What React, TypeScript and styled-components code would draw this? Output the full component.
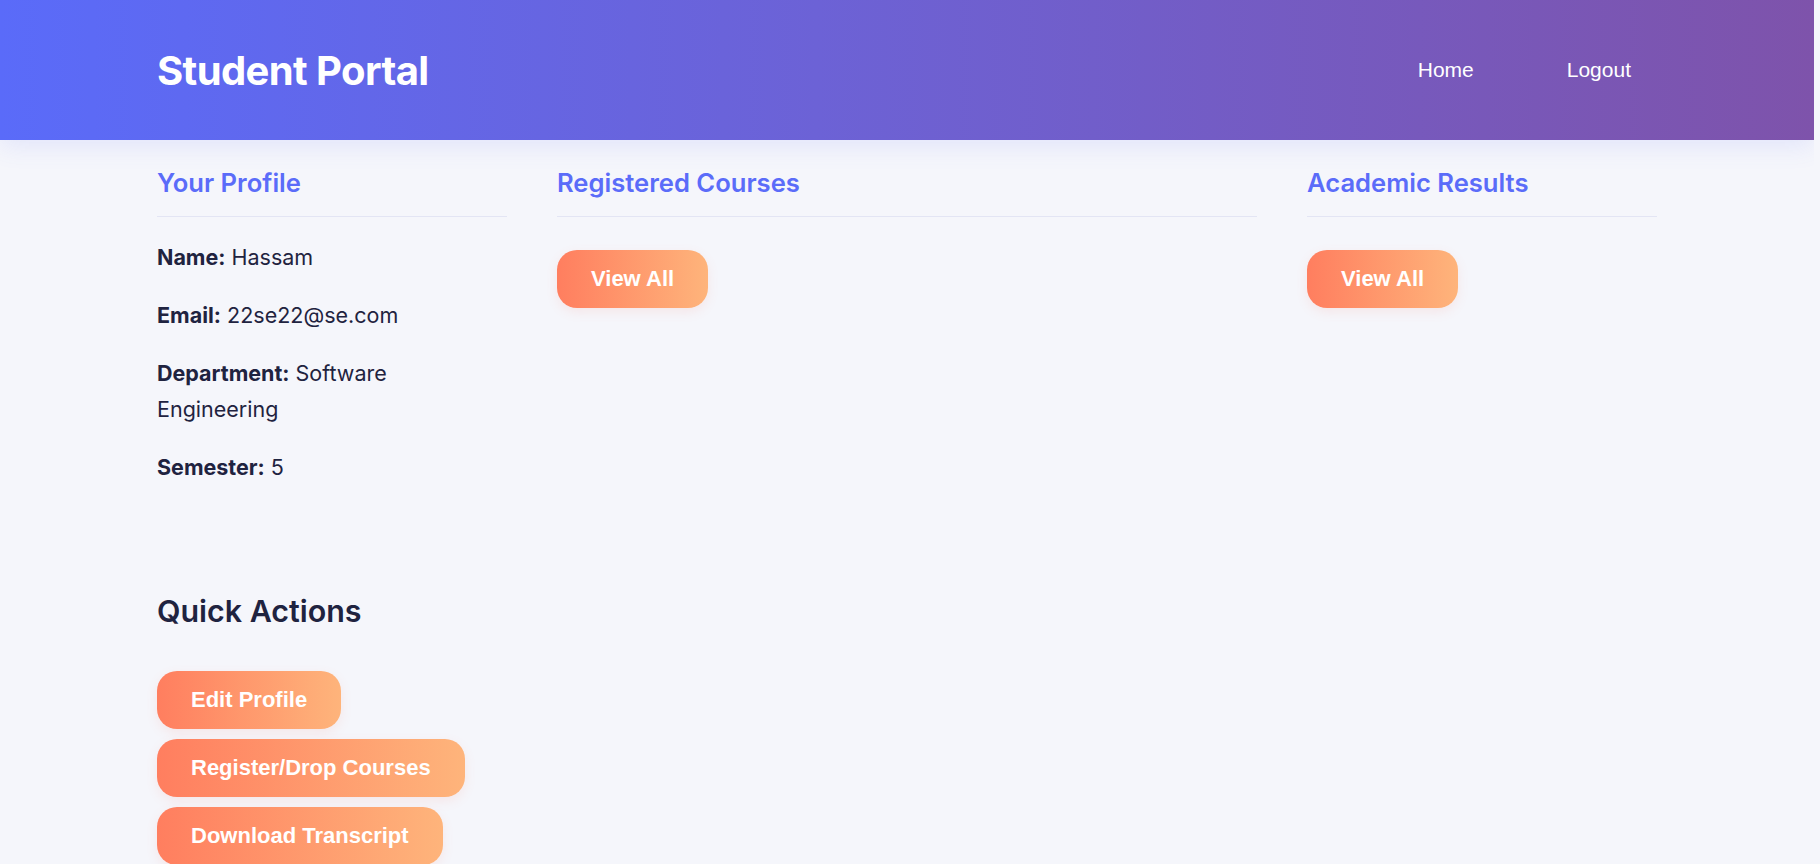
import styled, { createGlobalStyle } from "styled-components";

// ─── Global ───────────────────────────────────────────────────────────────────

const GlobalStyle = createGlobalStyle`
  body {
    margin: 0 6px 0 0;
    background: #f5f6fb;
    font-family: Inter, "Noto Sans", sans-serif;
    color: #1f2340;
  }

  * {
    box-sizing: border-box;
  }
`;

// ─── Styled Components ────────────────────────────────────────────────────────

const Header = styled.header`
  background: linear-gradient(90deg, #5a6bf9 0%, #6c62d6 45%, #7e53ab 100%);
  box-shadow: 0 6px 24px rgba(90, 107, 249, 0.12);
`;

const HeaderInner = styled.div`
  max-width: 1500px;
  height: 140px;
  margin: 0 auto;
  display: flex;
  align-items: center;
  justify-content: space-between;
`;

const Logo = styled.h1`
  margin: 0;
  font-family: Inter, sans-serif;
  font-size: 40px;
  font-weight: 700;
  letter-spacing: -0.6px;
  color: #ffffff;
`;

const Nav = styled.nav`
  display: flex;
  align-items: center;
  gap: 41px;
`;

const NavLink = styled.a`
  padding: 8px 26px;
  font-family: "Liberation Sans", Arial, sans-serif;
  font-size: 21px;
  font-weight: 500;
  color: #ffffff;
  text-decoration: none;
  cursor: pointer;
`;

const Main = styled.main`
  max-width: 1500px;
  margin: 0 auto;
  padding-top: 27px;
`;

const Grid = styled.div`
  display: grid;
  grid-template-columns: 1fr 2fr 1fr;
  gap: 50px;
`;

const Panel = styled.section`
  min-width: 0;
`;

const PanelTitle = styled.h2`
  margin: 0;
  padding-bottom: 18px;
  border-bottom: 1px solid #e3e5f4;
  font-size: 25.6px;
  font-weight: 600;
  color: #5b6cf9;
`;

const InfoRow = styled.p`
  margin: 22px 0;
  font-size: 21.5px;
  line-height: 36px;
  color: #1f2340;

  strong {
    font-weight: 700;
  }
`;

const PanelActions = styled.div`
  margin-top: 33px;
`;

const Button = styled.button`
  display: inline-block;
  padding: 16px 34px;
  border: none;
  border-radius: 20px;
  background: linear-gradient(90deg, #ff7e5f 0%, #feb47b 100%);
  box-shadow: 0 4px 12px rgba(255, 126, 95, 0.12);
  font-family: "Liberation Sans", Arial, sans-serif;
  font-size: 22px;
  font-weight: 700;
  line-height: 26px;
  color: #ffffff;
  cursor: pointer;
`;

const QuickSection = styled.section`
  margin-top: 86px;
`;

const QuickTitle = styled.h2`
  margin: 0;
  font-size: 30.4px;
  font-weight: 600;
  color: #1f2340;
`;

const ActionList = styled.div`
  margin-top: 42px;
  display: flex;
  flex-direction: column;
  align-items: flex-start;
  gap: 10px;
`;

// ─── Data ─────────────────────────────────────────────────────────────────────

const PROFILE = [
  { label: "Name", value: "Hassam" },
  { label: "Email", value: "22se22@se.com" },
  { label: "Department", value: "Software Engineering" },
  { label: "Semester", value: "5" },
];

const QUICK_ACTIONS = ["Edit Profile", "Register/Drop Courses", "Download Transcript"];

// ─── Component ────────────────────────────────────────────────────────────────

export default function App() {
  return (
    <>
      <GlobalStyle />
      <Header>
        <HeaderInner>
          <Logo>Student Portal</Logo>
          <Nav>
            <NavLink>Home</NavLink>
            <NavLink>Logout</NavLink>
          </Nav>
        </HeaderInner>
      </Header>

      <Main>
        <Grid>
          <Panel>
            <PanelTitle>Your Profile</PanelTitle>
            {PROFILE.map((row) => (
              <InfoRow key={row.label}>
                <strong>{row.label}:</strong> {row.value}
              </InfoRow>
            ))}
          </Panel>

          <Panel>
            <PanelTitle>Registered Courses</PanelTitle>
            <PanelActions>
              <Button>View All</Button>
            </PanelActions>
          </Panel>

          <Panel>
            <PanelTitle>Academic Results</PanelTitle>
            <PanelActions>
              <Button>View All</Button>
            </PanelActions>
          </Panel>
        </Grid>

        <QuickSection>
          <QuickTitle>Quick Actions</QuickTitle>
          <ActionList>
            {QUICK_ACTIONS.map((action) => (
              <Button key={action}>{action}</Button>
            ))}
          </ActionList>
        </QuickSection>
      </Main>
    </>
  );
}
